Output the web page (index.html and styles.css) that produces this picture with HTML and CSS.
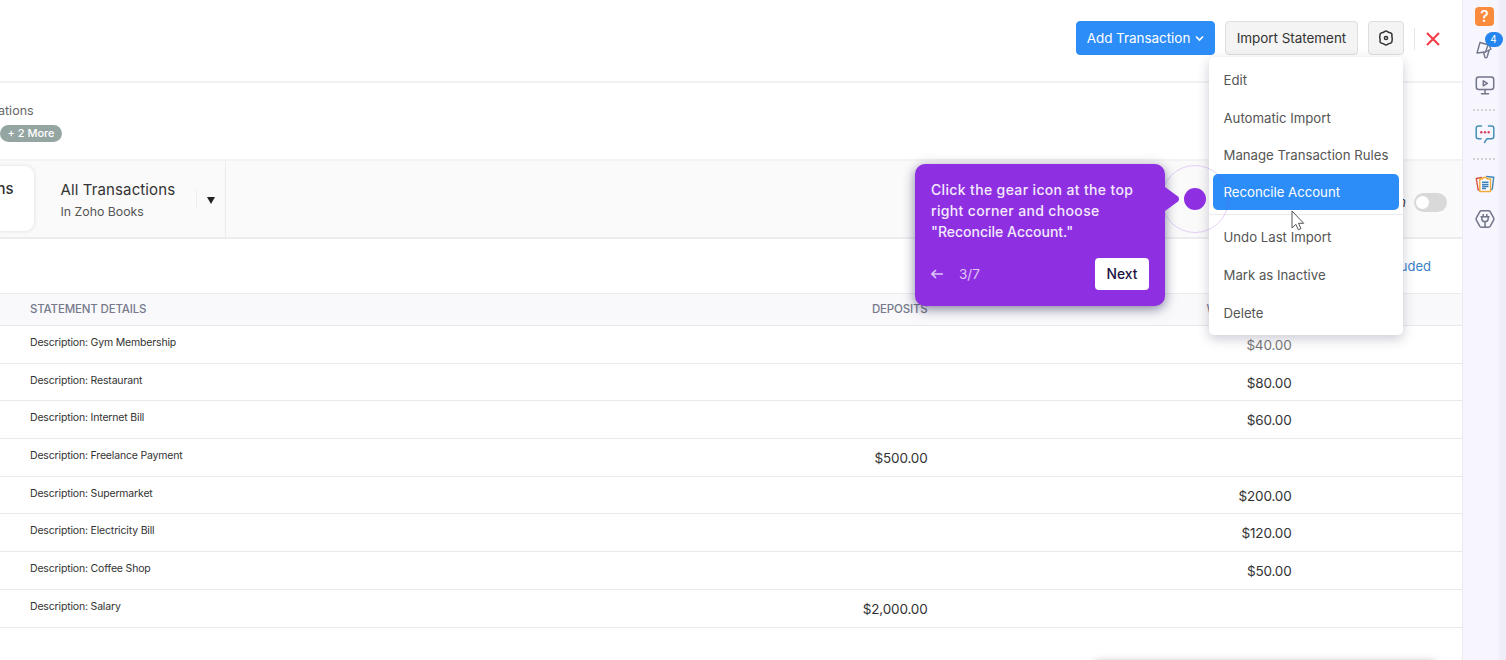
FILE: index.html
```html
<!DOCTYPE html>
<html lang="en">
<head>
    <meta charset="UTF-8">
    <meta name="viewport" content="width=device-width, initial-scale=1.0">
    <title>Bank Transactions</title>
    <link rel="stylesheet" href="styles.css">
</head>
<body>
    <div class="container">
        <main class="main-content">
            <header class="topbar">
                <button class="btn btn-primary">Add Transaction
                    <svg class="chevron" width="9" height="7" viewBox="0 0 9 7"><path d="M1 1.5l3.5 3.5L8 1.5" fill="none" stroke="#fff" stroke-width="1.6"/></svg>
                </button>
                <button class="btn btn-import">Import Statement</button>
                <div class="gear-wrap">
                    <button class="btn btn-gear">
                        <svg width="16" height="16" viewBox="0 0 16 16" fill="none" stroke="#333" stroke-width="1.5" stroke-linejoin="round">
                            <path d="M6.500 1.600Q8 .4 9.500 1.600 10.800 2.700 12.300 2.800 14.200 3.200 14 5.200 13.700 6.700 14.200 8 14.300 9.300 14 10.800 14.200 12.800 12.300 13.200 10.800 13.300 9.500 14.400 8 15.600 6.500 14.400 5.200 13.300 3.700 13.200 1.800 12.800 2 10.800 2.300 9.300 1.800 8 1.700 6.700 2 5.200 1.800 3.200 3.700 2.800 5.200 2.700 6.500 1.600z"/>
                            <circle cx="8" cy="8" r="1.600"/>
                        </svg>
                    </button>
                    <div class="menu">
                        <a class="menu-item">Edit</a>
                        <a class="menu-item">Automatic Import</a>
                        <a class="menu-item">Manage Transaction Rules</a>
                        <a class="menu-item active">Reconcile Account</a>
                        <div class="menu-divider"></div>
                        <a class="menu-item">Undo Last Import</a>
                        <a class="menu-item">Mark as Inactive</a>
                        <a class="menu-item">Delete</a>
                    </div>
                </div>
                <span class="close">
                    <svg width="14" height="14" viewBox="0 0 14 14"><path d="M1 1l12 12M13 1L1 13" stroke="#f2404d" stroke-width="2.2"/></svg>
                </span>
            </header>

            <section class="info">
                <div class="info-label">ations</div>
                <span class="pill">+ 2 More</span>
            </section>

            <section class="tabs">
                <div class="tab-current">ns</div>
                <div class="tab-all">
                    <div>
                        <div class="tab-title">All Transactions</div>
                        <div class="tab-sub">In Zoho Books</div>
                    </div>
                    <span class="caret"></span>
                </div>
                <div class="switch-wrap">
                    <span class="switch-label">n</span>
                    <span class="switch"></span>
                </div>
            </section>

            <section class="toolbar">
                <a class="link">Excluded</a>
            </section>

            <div class="table">
                <div class="row head"><span>STATEMENT DETAILS</span><span class="num">DEPOSITS</span><span class="num">WITHDRAWALS</span></div>
                <div class="row"><span>Description: Gym Membership</span><span class="num"></span><span class="num faded">$40.00</span></div>
                <div class="row"><span>Description: Restaurant</span><span class="num"></span><span class="num">$80.00</span></div>
                <div class="row"><span>Description: Internet Bill</span><span class="num"></span><span class="num">$60.00</span></div>
                <div class="row"><span>Description: Freelance Payment</span><span class="num">$500.00</span><span class="num"></span></div>
                <div class="row"><span>Description: Supermarket</span><span class="num"></span><span class="num">$200.00</span></div>
                <div class="row"><span>Description: Electricity Bill</span><span class="num"></span><span class="num">$120.00</span></div>
                <div class="row"><span>Description: Coffee Shop</span><span class="num"></span><span class="num">$50.00</span></div>
                <div class="row"><span>Description: Salary</span><span class="num">$2,000.00</span><span class="num"></span></div>
            </div>
        </main>

        <aside class="sidebar">
            <span class="help">?</span>
            <span class="side-icon announce">
                <svg width="20" height="22" viewBox="0 0 20 22" fill="none" stroke="#72768a" stroke-width="1.4" stroke-linejoin="round" stroke-linecap="round">
                    <path d="M5 3.500L2 14l8.500-1L16 10 14 6 5 3.500z"/>
                    <path d="M10.500 13l2.500-7M8.500 13.300l1.500 5.200q1.500 1 2.200-.5l1.800-6.500"/>
                </svg>
                <span class="badge">4</span>
            </span>
            <span class="side-icon screen">
                <svg width="20" height="20" viewBox="0 0 20 20" fill="none" stroke="#72768a" stroke-width="1.5" stroke-linejoin="round" stroke-linecap="round">
                    <rect x="1.300" y="2" width="17.400" height="12.500" rx="2.500"/>
                    <path d="M8.300 5.800v5l4-2.500zM10 14.500v4M6.500 18.800h7"/>
                </svg>
            </span>
            <span class="dots"></span>
            <span class="side-icon chat">
                <svg width="20" height="20" viewBox="0 0 20 20" fill="none" stroke="#458fb4" stroke-width="1.5" stroke-linejoin="round" stroke-linecap="round">
                    <path d="M6.500 2H3.500Q1.200 2 1.200 4.200v8.300q0 2.200 2.200 2.200H6M13.500 2h3q2.300 0 2.300 2.200v8.300q0 2.200-2.200 2.200H12L9.500 18.500"/>
                    <g fill="#d8415f" stroke="none"><circle cx="6.300" cy="8.300" r="1.200"/><circle cx="10" cy="8.300" r="1.200"/><circle cx="13.700" cy="8.300" r="1.200"/></g>
                </svg>
            </span>
            <span class="dots"></span>
            <span class="side-icon docs">
                <svg width="20" height="20" viewBox="0 0 20 20" fill="none" stroke-width="1.4" stroke-linejoin="round">
                    <path d="M4.500 15.800l-1.300.2L1.300 4.500 7 3.500" stroke="#d95340"/>
                    <path d="M11 2.500l7.700.8L17.300 15l-1.500 1" stroke="#3f8ab5"/>
                    <path d="M4.800 17.500V5h2.500l1-1.500h3l1 1.500h3.200v12.500z" fill="#fff" stroke="#f0aa40"/>
                    <path d="M7 8.200h6.500M7 10.400h6.500M7 12.600h6.500M7 14.500h4" stroke="#3a80bb" stroke-width="1.500"/>
                </svg>
            </span>
            <span class="side-icon plug">
                <svg width="20" height="20" viewBox="0 0 20 20" fill="none" stroke="#72768a" stroke-width="1.5" stroke-linejoin="round">
                    <path d="M6.500 1.800h7q1.200 0 1.800 1l3.300 6.100q.6 1.100 0 2.200l-3.300 6.100q-.6 1-1.800 1h-7q-1.200 0-1.800-1L1.400 11.100q-.6-1.100 0-2.200L4.700 2.800q.6-1 1.800-1z"/>
                    <path d="M5.500 7.800h9M6.800 7.800v2q0 2.900 3.200 2.900t3.200-2.900v-2M8.200 7.800V5M11.800 7.800V5M10 12.700v5.500"/>
                </svg>
            </span>
        </aside>
    </div>

    <div class="bottom-shadow"></div>

    <!-- guided tour step -->
    <div class="beacon"></div>
    <div class="tour">
        <p class="tour-text"><span class="wide">Click the gear icon at the top<br>right corner and choose</span><br>"Reconcile Account."</p>
        <div class="tour-footer">
            <svg width="12" height="10" viewBox="0 0 12 10"><path d="M12 5H1.200M5 1L1 5l4 4" fill="none" stroke="#e0c8f5" stroke-width="1.6"/></svg>
            <span class="tour-step">3/7</span>
            <button class="tour-next">Next</button>
        </div>
        <svg class="tour-arrow" width="14" height="24" viewBox="0 0 14 24"><path d="M0 0l13 9.500q2 2.500 0 5L0 24z" fill="#8e30e2"/></svg>
    </div>
    <svg class="cursor" width="14" height="21" viewBox="0 0 14 21"><path d="M1 1v17l3.800-3.700 2.600 5.500 2.600-1.200-2.500-5.300h5.200z" fill="#fff" stroke="#555" stroke-width="1"/></svg>
</body>
</html>
```
FILE: styles.css
```css
* {
    box-sizing: border-box;
}

body {
    margin: 0;
    height: 660px;
    position: relative;
    overflow: hidden;
    background-color: #fff;
    color: #333;
    font-family: Inter, "Liberation Sans", sans-serif;
    font-size: 14px;
}

button {
    font-family: inherit;
    padding: 0;
}

svg {
    display: block;
}

.container {
    display: flex;
    height: 660px;
}

.main-content {
    flex: 1;
}

/* top bar */
.topbar {
    display: flex;
    justify-content: flex-end;
    align-items: flex-start;
    height: 83px;
    padding: 21px 21px 0 0;
    border-bottom: 2px solid #f1f1f4;
}

.btn {
    height: 34px;
    border: 1px solid #dedede;
    border-radius: 4px;
    background-color: #f4f4f4;
    color: #333;
    font-size: 13.5px;
    letter-spacing: -0.05px;
    margin-right: 10px;
}

.btn-primary {
    display: flex;
    align-items: center;
    justify-content: center;
    gap: 5px;
    width: 139px;
    background-color: #2d8df8;
    border-color: #2d8df8;
    color: #fff;
}

.btn-import {
    width: 133px;
}

.gear-wrap {
    position: relative;
}

.btn-gear {
    display: flex;
    align-items: center;
    justify-content: center;
    width: 36px;
}

.close {
    display: flex;
    align-items: center;
    height: 22px;
    margin-top: 7px;
    padding: 0 1px 0 11px;
    border-left: 1px solid #e6e6e6;
}

.menu {
    position: absolute;
    z-index: 2;
    top: 36px;
    left: -159px;
    width: 194px;
    height: 278px;
    padding: 4px;
    background-color: #fff;
    border-radius: 5px;
    box-shadow: 0 4px 12px rgba(50, 50, 93, 0.25);
}

.menu-item {
    display: flex;
    align-items: center;
    height: 37.8px;
    padding-left: 10.5px;
    color: #555;
    font-size: 13.2px;
    white-space: nowrap;
}

.menu-item.active {
    height: 36px;
    border-radius: 5px;
    background-color: #2d8df8;
    color: #fff;
}

.menu-divider {
    height: 1px;
    margin: 4px -4px 3px;
    background-color: #ececf0;
}

/* account info */
.info {
    height: 76px;
    padding-top: 20px;
}

.info-label {
    height: 22px;
    margin-left: -2px;
    line-height: 16px;
    font-size: 12.5px;
    color: #666;
}

.pill {
    display: block;
    width: 62px;
    height: 17px;
    border-radius: 9px;
    background-color: #94a5a2;
    color: #fff;
    font-size: 11px;
    font-weight: 500;
    line-height: 17px;
    text-align: center;
}

/* tabs */
.tabs {
    display: flex;
    height: 80px;
    background-color: #fafafa;
    border-top: 2px solid #f3f3f3;
    border-bottom: 2px solid #ececee;
}

.tab-current {
    width: 34px;
    height: 65px;
    margin-top: 5px;
    padding-top: 14px;
    border-radius: 0 9px 9px 0;
    background-color: #fff;
    box-shadow: 0 0 4px rgba(0, 0, 0, 0.12);
    font-weight: 500;
    font-size: 15px;
    line-height: 18px;
    text-indent: -3.5px;
}

.tab-all {
    display: flex;
    justify-content: space-between;
    align-items: flex-start;
    width: 192px;
    padding: 18px 10px 0 26.5px;
    border-right: 1px solid #ececee;
}

.tab-title {
    font-size: 15px;
    line-height: 21px;
    letter-spacing: 0.12px;
}

.tab-sub {
    font-size: 12.3px;
    line-height: 16px;
    padding-top: 4px;
    color: #555;
}

.caret {
    width: 19px;
    height: 20px;
    margin-top: 10px;
    border-left: 1px solid #eee;
}

.caret::after {
    content: "";
    display: block;
    margin: 8px 0 0 10px;
    width: 8px;
    height: 7px;
    background-color: #222;
    clip-path: polygon(0 0, 100% 0, 50% 100%);
}

.switch-wrap {
    display: flex;
    align-items: center;
    margin-left: auto;
    padding: 6px 15px 0 0;
}

.switch-label {
    font-style: italic;
    font-size: 13px;
    margin-right: 8px;
}

.switch {
    width: 33px;
    height: 19px;
    padding: 3px 2px;
    border-radius: 10px;
    background-color: #d9d9d9;
}

.switch::before {
    content: "";
    display: block;
    width: 13px;
    height: 13px;
    border-radius: 50%;
    background-color: #fff;
}

.toolbar {
    display: flex;
    justify-content: flex-end;
    align-items: center;
    height: 54px;
    padding-right: 31px;
}

.link {
    color: #3a7fc9;
    font-size: 13px;
}

/* transactions table */
.row {
    display: grid;
    grid-template-columns: 500px 427.5px 364px;
    height: 37.7px;
    border-bottom: 1px solid #e9e9ec;
    line-height: 34px;
    font-size: 10.5px;
    letter-spacing: -0.17px;
}

.row span:first-child {
    padding-left: 30px;
}

.num {
    text-align: right;
    font-size: 13.5px;
    line-height: 38.5px;
}

.num.faded {
    color: #777;
}

.head,
.head .num {
    color: #767a8c;
    font-size: 11.5px;
    font-weight: 500;
    line-height: 30px;
}

.head {
    height: 33px;
    background-color: #f9f9fb;
    border-top: 1px solid #ececf0;
}

/* right icon bar */
.sidebar {
    display: flex;
    flex-direction: column;
    align-items: center;
    width: 44px;
    padding-top: 7px;
    border-left: 1px solid #ebebef;
    background: linear-gradient(to right, #f7f5fd 34px, #efedf6 38px);
}

.help {
    width: 19px;
    height: 19px;
    border-radius: 4px;
    background-color: #fa8b3d;
    color: #fff;
    font-size: 16px;
    font-weight: 500;
    line-height: 19px;
    text-align: center;
}

.side-icon {
    position: relative;
}

.announce {
    margin-top: 13px;
}

.badge {
    position: absolute;
    top: -7px;
    left: 10px;
    width: 18px;
    height: 15px;
    border-radius: 8px;
    background-color: #2485ee;
    color: #fff;
    font-size: 10px;
    line-height: 15px;
    text-align: center;
}

.screen {
    margin-top: 14px;
}

.dots {
    width: 24px;
    height: 2px;
    margin-top: 14px;
    background: repeating-linear-gradient(to right, #d2d2d8 0 2px, transparent 2px 4px);
}

.chat {
    margin-top: 13px;
}

.docs {
    margin-top: 14px;
}

.plug {
    margin-top: 15px;
}

.bottom-shadow {
    position: absolute;
    top: 662px;
    left: 1095px;
    width: 340px;
    height: 20px;
    box-shadow: 0 0 8px rgba(0, 0, 0, 0.3);
}

/* tour popup */
.beacon {
    position: absolute;
    z-index: 3;
    left: 1161px;
    top: 165px;
    width: 68px;
    height: 68px;
    border: 1px solid rgba(142, 48, 226, 0.22);
    border-radius: 50%;
}

.beacon::after {
    content: "";
    display: block;
    width: 22px;
    height: 22px;
    margin: 22px;
    border-radius: 50%;
    background-color: #8e30e2;
}

.tour {
    position: absolute;
    z-index: 4;
    left: 915px;
    top: 164px;
    width: 250px;
    height: 142px;
    padding: 15px 16px;
    border-radius: 10px;
    background-color: #8e30e2;
    box-shadow: 0 3px 12px rgba(30, 30, 80, 0.55);
    color: #f4eafc;
}

.tour-text {
    margin: 0;
    font-size: 14px;
    font-weight: 500;
    line-height: 21px;
    white-space: nowrap;
}

.tour-text .wide {
    letter-spacing: 0.35px;
}

.tour-footer {
    display: flex;
    align-items: center;
    margin-top: 16px;
}

.tour-step {
    margin-left: 16px;
    color: #e0c8f5;
    font-size: 13.5px;
}

.tour-next {
    width: 54px;
    height: 32px;
    margin-left: auto;
    border: none;
    border-radius: 4px;
    background-color: #fff;
    color: #1b1142;
    font-size: 13.8px;
    font-weight: 500;
}

.tour-arrow {
    position: absolute;
    left: 250px;
    top: 23px;
}

.cursor {
    position: absolute;
    z-index: 5;
    left: 1291px;
    top: 210px;
}
```
